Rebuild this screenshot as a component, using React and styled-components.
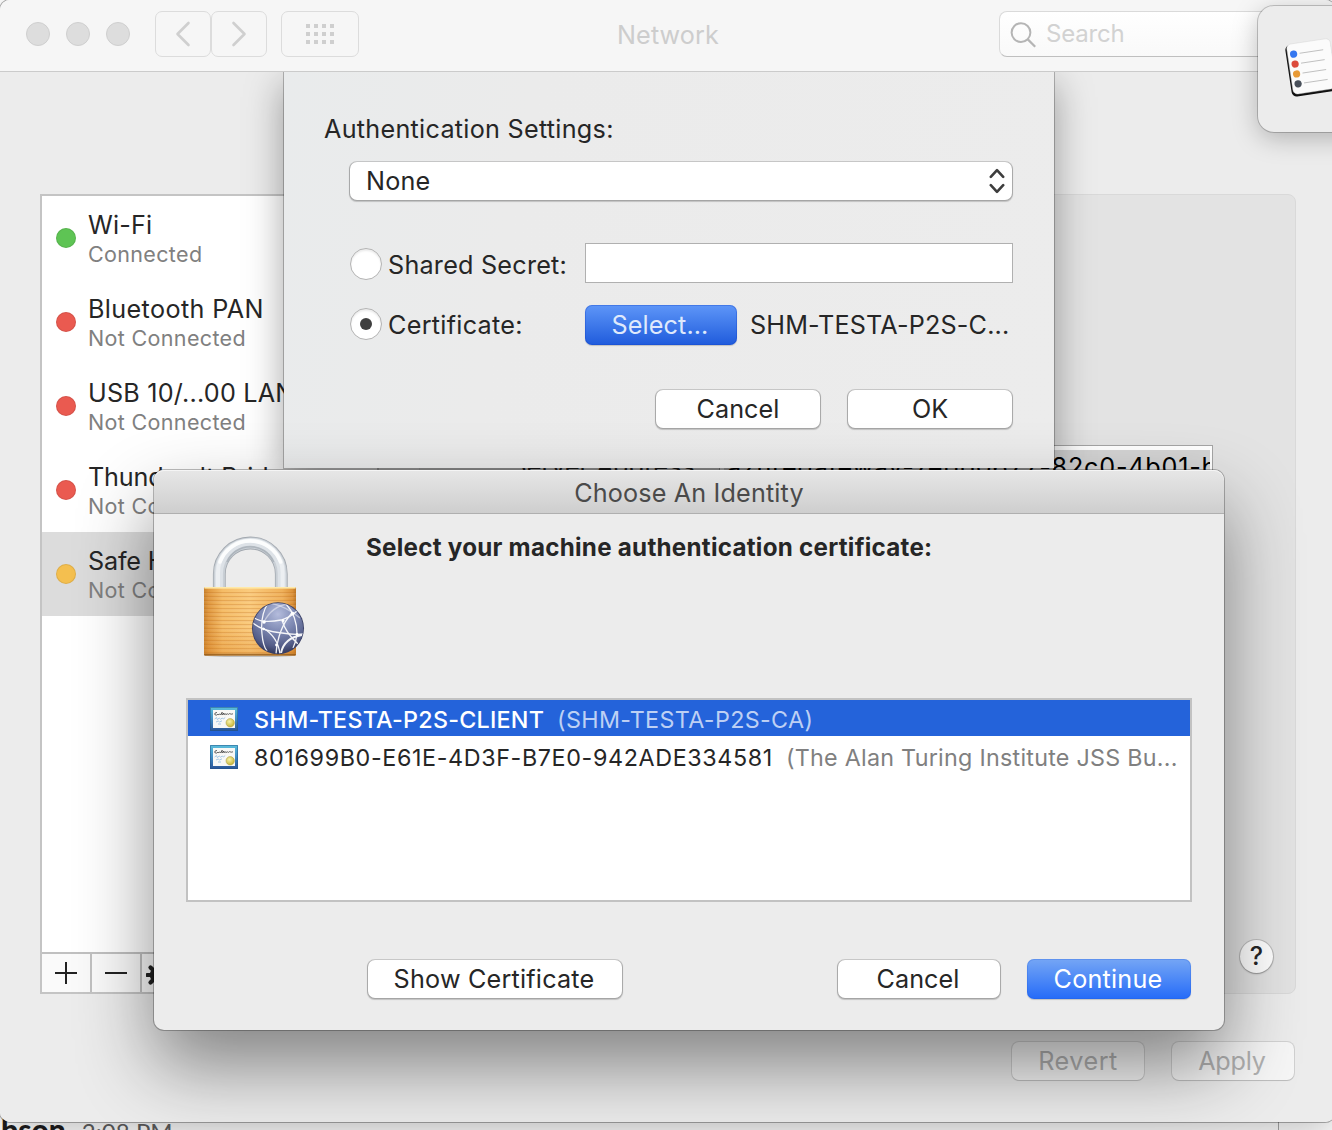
import React from "react";
import styled, { createGlobalStyle } from "styled-components";

const GlobalStyle = createGlobalStyle`
  * { box-sizing: border-box; }
  body {
    margin: 0;
    font-family: Inter, "Liberation Sans", sans-serif;
    color: #262626;
    overflow: hidden;
  }
`;

const Desktop = styled.div`
  position: relative;
  width: 1332px;
  height: 1130px;
  overflow: hidden;
  background: #fff;
`;

const ChatWindow = styled.div`
  position: absolute;
  left: 0;
  top: 1100px;
  width: 1279px;
  height: 80px;
  border-right: 1px solid #a8a8a8;
  display: flex;
  align-items: baseline;
  gap: 16px;
  padding: 11px 0 0 1px;
  font-family: Lato, sans-serif;
  white-space: nowrap;
`;

const ChatAuthor = styled.span`
  font-size: 30px;
  font-weight: 900;
  color: #1d1c1d;
`;

const ChatTime = styled.span`
  font-size: 24px;
  letter-spacing: 0.05px;
  color: #616061;
`;

const Text = styled.span`
  display: block;
  font-size: ${(p) => p.$size || 25.2}px;
  font-weight: ${(p) => p.$weight || 400};
  letter-spacing: ${(p) => p.$ls || 0}px;
  line-height: ${(p) => p.$lh || 30}px;
  color: ${(p) => p.$color || "inherit"};
  white-space: nowrap;
`;

/* ---------- Network preferences window ---------- */

const Window = styled.section`
  position: absolute;
  isolation: isolate;
  left: 0;
  top: 0;
  width: 1335px;
  height: 1122px;
  display: flex;
  flex-direction: column;
  background: #ececec;
  border-radius: 10px;
  overflow: hidden;
`;

const WindowShadow = styled.div`
  position: absolute;
  left: 0;
  top: 0;
  width: 1335px;
  height: 1122px;
  border-radius: 10px;
  box-shadow: 0 0 0 1px rgba(0, 0, 0, 0.3), 0 10px 40px rgba(0, 0, 0, 0.25);
`;

const Toolbar = styled.header`
  position: relative;
  z-index: 2;
  flex: none;
  display: flex;
  align-items: flex-start;
  height: 72px;
  padding: 11px 16px 0 26px;
  background: #f6f6f6;
  border-bottom: 1px solid #cbcbcb;
`;

const Lights = styled.div`
  display: flex;
  align-items: center;
  gap: 16px;
  height: 46px;
  margin-right: 25px;
`;

const Light = styled.i`
  width: 24px;
  height: 24px;
  border-radius: 50%;
  background: #dddddd;
  border: 1px solid #cfcfcf;
`;

const ToolButton = styled.div`
  display: flex;
  align-items: center;
  justify-content: center;
  width: ${(p) => p.$w}px;
  height: 46px;
  margin-right: ${(p) => p.$mr || 0}px;
  border: 1px solid #dcdcdc;
  border-radius: 7px;
`;

const WindowTitle = styled.div`
  flex: 1;
  display: flex;
  align-items: center;
  justify-content: center;
  height: 48px;
  padding-right: 22px;
`;

const SearchField = styled.div`
  display: flex;
  align-items: center;
  width: 320px;
  height: 46px;
  padding-left: 10px;
  gap: 8px;
  background: linear-gradient(#ffffff, #f9f9f9);
  border: 1px solid #dadada;
  border-bottom-color: #bfbfbf;
  border-radius: 8px;
`;

const WindowBody = styled.div`
  position: relative;
  flex: 1;
  padding: 122px 39px 0 40px;
`;

const Panes = styled.div`
  display: flex;
  gap: 40px;
  height: 800px;
`;

const Sidebar = styled.div`
  flex: none;
  display: flex;
  flex-direction: column;
  width: 339px;
  border: 2px solid #c4c4c4;
  background: #fff;
`;

const ServiceList = styled.div`
  flex: 1;
`;

const Service = styled.div`
  display: flex;
  align-items: center;
  gap: 12px;
  height: 84px;
  padding-left: 14px;
  background: ${(p) => (p.$selected ? "#dcdcdc" : "transparent")};
`;

const StatusDot = styled.i`
  flex: none;
  width: 20px;
  height: 20px;
  border-radius: 50%;
  background: ${(p) => p.$color};
  box-shadow: inset 0 0 0 1px rgba(0, 0, 0, 0.09);
`;

const ServiceText = styled.div`
  padding-top: 2px;
  overflow: hidden;
`;

const SidebarActions = styled.div`
  display: flex;
  height: 40px;
  border-top: 2px solid #c0c0c0;
  background: #fafafa;
`;

const SidebarAction = styled.div`
  display: flex;
  align-items: center;
  justify-content: center;
  width: 50px;
  border-right: 2px solid #c0c0c0;
`;

const GearAction = styled.div`
  display: flex;
  align-items: center;
  padding: 3px 0 0 4px;
`;

const DetailPane = styled.div`
  flex: 1;
  display: flex;
  flex-direction: column;
  justify-content: space-between;
  align-items: flex-end;
  padding: 250px 22px 20px 0;
  background: #e3e3e3;
  border: 1px solid #d9d9d9;
  border-radius: 8px;
`;

const AddressRow = styled.div`
  display: flex;
  align-items: center;
  gap: 17px;
  margin-right: 60px;
`;

const AddressField = styled.div`
  width: 494px;
  height: 42px;
  padding: 4px 2px 4px 4px;
  background: #fff;
  border: 1px solid #a5a5a5;
`;

const SelectedAddress = styled.div`
  height: 100%;
  padding-left: 3px;
  overflow: hidden;
  background: #d4d4d4;
  color: #000;
`;

const HelpButton = styled.div`
  display: flex;
  align-items: center;
  justify-content: center;
  width: 33px;
  height: 33px;
  padding-bottom: 1px;
  border-radius: 50%;
  background: #fff;
  box-shadow: 0 0 0 1px rgba(0, 0, 0, 0.15), 0 1px 2px rgba(0, 0, 0, 0.25);
`;

const WindowFooter = styled.div`
  display: flex;
  justify-content: flex-end;
  gap: 26px;
  padding: 47px 1px 0 0;
`;

/* ---------- Shared controls ---------- */

const variants = {
  plain: `
    margin: 1px;
    background: #fff;
    color: #262626;
    box-shadow: 0 0 0 1px rgba(0,0,0,0.14), 0 1px 1px 0.5px rgba(0,0,0,0.18);
  `,
  disabled: `
    margin: 1px;
    background: #f6f6f6;
    color: #b1b1b1;
    box-shadow: 0 0 0 1px rgba(0,0,0,0.11), 0 1px 1px 0 rgba(0,0,0,0.1);
  `,
  pressed: `
    background: linear-gradient(#5e96f8, #1f5bdc);
    color: #dfe9fc;
    box-shadow: inset 0 0 0 1px rgba(20,70,200,0.35), 0 1px 1px rgba(0,0,0,0.18);
  `,
  primary: `
    background: linear-gradient(#75a6f5, #256bf8);
    color: #fff;
    box-shadow: inset 0 0 0 1px rgba(30,90,220,0.25), 0 1px 1px rgba(0,0,0,0.18);
  `,
};

const ButtonBox = styled.div`
  display: flex;
  width: ${(p) => p.$w}px;
  height: 40px;
  margin-right: ${(p) => p.$mr || 0}px;
`;

const Face = styled.button`
  flex: 1;
  display: flex;
  align-items: center;
  justify-content: center;
  padding: 0 ${(p) => p.$pr}px 0 0;
  border: 0;
  border-radius: 7px;
  font-family: inherit;
  ${(p) => variants[p.$variant]}
`;

const Button = ({ w, mr, pr = 2, variant = "plain", ls, children }) => (
  <ButtonBox $w={w} $mr={mr}>
    <Face $variant={variant} $pr={pr}>
      <Text $ls={ls}>{children}</Text>
    </Face>
  </ButtonBox>
);

/* ---------- Authentication sheet ---------- */

const Sheet = styled.section`
  position: absolute;
  z-index: 1;
  left: 284px;
  top: 0;
  width: 770px;
  height: 396px;
  padding: 37px 41px 0 40px;
  background: linear-gradient(100deg, #e9ebec 0%, #ebebeb 30%, #ececec 100%);
  box-shadow: 0 0 0 1px rgba(0, 0, 0, 0.24), 0 12px 36px rgba(0, 0, 0, 0.36);
`;

const SheetForm = styled.div`
  padding: 12px 0 0 25px;
`;

const PopUp = styled.div`
  display: flex;
  align-items: center;
  justify-content: space-between;
  height: 38px;
  margin: 1px 1px 43px;
  padding: 0 7.5px 0 16px;
  border-radius: 7px;
  background: #fff;
  box-shadow: 0 0 0 1px rgba(0, 0, 0, 0.14), 0 1px 1px 0.5px rgba(0, 0, 0, 0.18);
`;

const FormRow = styled.div`
  display: grid;
  grid-template-columns: 236px 1fr;
  align-items: center;
  height: 40px;
  margin-bottom: ${(p) => p.$mb}px;
`;

const RadioLabel = styled.div`
  display: flex;
  align-items: center;
  gap: 6px;
  padding: ${(p) => p.$pt || 0}px 0 0 1px;
`;

const Radio = styled.i`
  display: flex;
  align-items: center;
  justify-content: center;
  width: 32px;
  height: 32px;
  margin-bottom: 2px;
  border-radius: 50%;
  border: 1px solid #b3b3b3;
  background: #fff;
  box-shadow: inset 0 2px 2px rgba(0, 0, 0, 0.08);
  &::after {
    content: "";
    width: 12px;
    height: 12px;
    border-radius: 50%;
    background: ${(p) => (p.$on ? "#3f3f3f" : "transparent")};
  }
`;

const SecretInput = styled.div`
  height: 40px;
  border: 1px solid #b0b0b0;
  background: #fff;
`;

const CertChoice = styled.div`
  display: flex;
  align-items: center;
`;

const ButtonRow = styled.div`
  display: flex;
  justify-content: flex-end;
`;

/* ---------- Identity dialog ---------- */

const Dialog = styled.section`
  position: absolute;
  left: 154px;
  top: 470px;
  width: 1070px;
  height: 560px;
  display: flex;
  flex-direction: column;
  background: #ececec;
  border-radius: 10px;
  box-shadow: 0 0 0 1px rgba(0, 0, 0, 0.26), 0 36px 76px rgba(0, 0, 0, 0.45);
`;

const DialogTitle = styled.header`
  display: flex;
  align-items: center;
  justify-content: center;
  height: 44px;
  padding-top: 3px;
  border-radius: 10px 10px 0 0;
  border-bottom: 1px solid #afafaf;
  background: linear-gradient(#e7e7e7, #cecece);
  box-shadow: inset 0 1px 0 #f5f5f5;
`;

const DialogBody = styled.div`
  display: flex;
  flex-direction: column;
  padding: 19px 32px 0;
`;

const DialogIntro = styled.div`
  display: flex;
  align-items: flex-start;
  height: 165px;
  padding-left: 12px;
  gap: 56px;
`;

const IdentityList = styled.div`
  display: flex;
  flex-direction: column;
  gap: 2px;
  height: 204px;
  border: 2px solid #c2c2c2;
  background: #fff;
`;

const Identity = styled.div`
  display: flex;
  align-items: center;
  height: 36px;
  padding: 3px 0 0 22px;
  background: ${(p) => (p.$selected ? "#2463da" : "transparent")};
  color: ${(p) => (p.$selected ? "#fff" : "#262626")};
`;

const IdentityName = styled(Text)`
  margin: 0 13px 0 16px;
`;

const DialogFooter = styled.div`
  display: flex;
  padding: 57px 0 0 181px;
`;

/* ---------- Notification banner ---------- */

const Banner = styled.aside`
  position: absolute;
  left: 1258px;
  top: 6px;
  width: 400px;
  height: 126px;
  display: flex;
  align-items: center;
  padding-left: 21px;
  background: #ececec;
  border-radius: 16px;
  box-shadow: 0 0 0 1px rgba(0, 0, 0, 0.2), 0 6px 26px rgba(0, 0, 0, 0.25);
`;

/* ---------- Drawings ---------- */

const Chevron = ({ flip }) => (
  <svg width="16" height="26" viewBox="0 0 16 26" fill="none" stroke="#cfcfcf" strokeWidth="2.6" strokeLinecap="round" strokeLinejoin="round">
    <path d={flip ? "M2.5 2 L13.5 13 L2.5 24" : "M13.5 2 L2.5 13 L13.5 24"} />
  </svg>
);

const GridIcon = () => (
  <svg width="28" height="20" viewBox="0 0 28 20" fill="#cfcfcf">
    {[0, 8, 16].map((y) => [0, 8, 16, 24].map((x) => <rect key={`${x}-${y}`} x={x} y={y} width="4" height="4" />))}
  </svg>
);

const SearchIcon = () => (
  <svg width="28" height="28" viewBox="0 0 28 28" fill="none" stroke="#b5b5b5" strokeWidth="2">
    <circle cx="11" cy="12.6" r="9.4" />
    <path d="M17.8 19.4 L25.2 26.8" strokeWidth="2.2" />
  </svg>
);

const UpDown = () => (
  <svg width="16" height="26" viewBox="0 0 16 26" fill="none" stroke="#3d3d3d" strokeWidth="2.6" strokeLinecap="round" strokeLinejoin="round">
    <path d="M1.8 8.8 L8 2.2 L14.2 8.8 M1.8 17.2 L8 23.8 L14.2 17.2" />
  </svg>
);

const Plus = () => (
  <svg width="22" height="22" viewBox="0 0 22 22" stroke="#222" strokeWidth="2">
    <path d="M0 11 H22 M11 0 V22" />
  </svg>
);

const Minus = () => (
  <svg width="22" height="22" viewBox="0 0 22 22" stroke="#222" strokeWidth="2">
    <path d="M0 11 H22" />
  </svg>
);

const Gear = () => (
  <svg width="24" height="24" viewBox="-12 -12 24 24" stroke="#222" fill="none">
    <circle r="6" strokeWidth="4.5" />
    {[0, 45, 90, 135, 180, 225, 270, 315].map((a) => (
      <path key={a} d="M8 0 H10.6" strokeWidth="4.2" strokeLinecap="round" transform={`rotate(${a})`} />
    ))}
  </svg>
);

const Padlock = () => (
  <svg width="112" height="128" viewBox="198 533 112 128">
    <defs>
      <linearGradient id="brass" x1="0" x2="1" y1="0" y2="0">
        <stop offset="0" stopColor="#c9832f" />
        <stop offset="0.05" stopColor="#e0983f" />
        <stop offset="0.2" stopColor="#f5bc66" />
        <stop offset="0.5" stopColor="#fbcb7d" />
        <stop offset="0.85" stopColor="#f0b15a" />
        <stop offset="0.96" stopColor="#dd933a" />
        <stop offset="1" stopColor="#bd7727" />
      </linearGradient>
      <pattern id="ridges" width="10" height="4" patternUnits="userSpaceOnUse">
        <rect width="10" height="1.3" fill="#b8691a" opacity="0.28" />
        <rect y="1.3" width="10" height="1" fill="#fff" opacity="0.1" />
      </pattern>
      <linearGradient id="lockShade" x1="0" x2="0" y1="0" y2="1">
        <stop offset="0.6" stopColor="#d97f1e" stopOpacity="0" />
        <stop offset="1" stopColor="#d97f1e" stopOpacity="0.3" />
      </linearGradient>
      <radialGradient id="globe" cx="0.5" cy="0.22" r="0.8">
        <stop offset="0" stopColor="#b4bcdc" />
        <stop offset="0.45" stopColor="#7d88b2" />
        <stop offset="0.8" stopColor="#545d88" />
        <stop offset="1" stopColor="#30365a" />
      </radialGradient>
      <clipPath id="globeClip">
        <circle cx="278" cy="628.3" r="25.2" />
      </clipPath>
    </defs>
    <ellipse cx="250" cy="655.4" rx="46" ry="1.4" fill="#000" opacity="0.25" />
    <g fill="none">
      <path d="M219.3 588 V574 a31 31 0 0 1 62 0 V588" stroke="#a3a9b0" strokeWidth="12.8" />
      <path d="M219.3 588 V574 a31 31 0 0 1 62 0 V588" stroke="#c9cfd5" strokeWidth="11.2" />
      <path d="M218.9 588 V573.6 a31.4 31.4 0 0 1 62.8 0 V588" stroke="#dde2e7" strokeWidth="8" />
      <path d="M218 588 V572.8 a32.3 32.3 0 0 1 64.6 0 V588" stroke="#eceff2" strokeWidth="4" />
      <path d="M220 562 a32.3 32.3 0 0 1 60.6 0" stroke="#fcfdfd" strokeWidth="3.6" strokeLinecap="round" />
      <path d="M227 562 a25.3 25.3 0 0 1 46.6 0" stroke="#9ba3ac" strokeWidth="1.8" opacity="0.6" />
    </g>
    <rect x="204" y="587" width="92" height="68.4" rx="1.5" fill="url(#brass)" />
    <rect x="204" y="591" width="92" height="63" fill="url(#ridges)" />
    <rect x="204" y="587" width="92" height="68.4" rx="1.5" fill="url(#lockShade)" />
    <rect x="204.5" y="587" width="91" height="1.6" fill="#ffe9a8" />
    <rect x="204" y="653.8" width="92" height="1.6" rx="0.8" fill="#8e5718" opacity="0.75" />
    <circle cx="278" cy="628.3" r="26" fill="#3a4066" />
    <circle cx="278" cy="628.3" r="25.2" fill="url(#globe)" />
    <g clipPath="url(#globeClip)" fill="none" stroke="#fff" strokeWidth="1.3" opacity="0.92">
      <path d="M253 617 Q262 624 281 620 Q291 617 297 611" />
      <path d="M253 623 Q262 631 282 633 Q294 635 304 634" />
      <path d="M268 603 Q260 616 262 634 Q263 646 267 651" />
      <path d="M286 604 Q297 616 297 634 Q296 642 293 648" />
      <path d="M292 613 Q278 628 276 654" />
      <path d="M282 620 Q285 632 298 644" />
      <path d="M263 628 Q278 637 280 654" />
      <path d="M270 603 Q286 606 300 618" opacity="0.5" />
      <path d="M281 653 Q284 638 302 635" strokeWidth="2" />
      <path d="M264 622 Q272 606 288 604" opacity="0.5" />
    </g>
    <g fill="#fff">
      <circle cx="264" cy="622" r="1.8" />
      <circle cx="292.5" cy="613.5" r="1.8" />
      <circle cx="263.5" cy="629" r="1.3" />
      <circle cx="283" cy="620.5" r="1.5" />
      <circle cx="276.5" cy="645" r="1.4" />
      <circle cx="297" cy="634.5" r="1.4" />
    </g>
  </svg>
);

const CertificateFrame = styled.svg`
  flex: none;
  width: 30px;
  height: 26px;
  margin: 0 -2px 1px 0;
`;

const CertificateIcon = () => (
  <CertificateFrame viewBox="0 0 30 26">
    <defs>
      <linearGradient id="frame" x1="0" x2="0" y1="0" y2="1">
        <stop offset="0" stopColor="#5cc0dc" />
        <stop offset="0.5" stopColor="#3f8cc4" />
        <stop offset="1" stopColor="#2a5496" />
      </linearGradient>
      <radialGradient id="seal" cx="0.4" cy="0.35" r="0.7">
        <stop offset="0" stopColor="#f8f3a8" />
        <stop offset="1" stopColor="#c3b02f" />
      </radialGradient>
    </defs>
    <rect x="0" y="1" width="28" height="24" rx="0.6" fill="url(#frame)" />
    <rect x="0.5" y="1.5" width="27" height="23" fill="none" stroke="#1f4f86" strokeOpacity="0.5" />
    <rect x="3" y="4" width="22" height="18" fill="#f8f8f6" />
    <path d="M7 6.4 q-3 0.4 -2.2 2.2 q1.4 1.4 3.2 -0.4 q1 1.2 1.8 -0.2 l1 0.6 l1.4 -2.4 l-0.4 2.4 q1.2 0.4 2 -1.6 l0.2 1.8 l1.2 -1.2 l0.6 1 l1.6 -0.8 l1 0.6 l1.2 -0.8 l1.6 0.6 l1.8 -0.4" fill="none" stroke="#333" strokeWidth="0.75" />
    <path d="M4.6 13 l2 -1.4 l0.8 2 l1.8 -1.6 l1.2 1.2 l2 -1.2 l1 1 l1.8 -1.4 M6 16 l2.2 -1 l1.4 1 l2.4 -1.2 M8 18 l3 0" fill="none" stroke="#8fbbe0" strokeWidth="0.8" />
    <circle cx="20.2" cy="16.8" r="4.2" fill="url(#seal)" stroke="#a89a3c" strokeWidth="0.5" />
  </CertificateFrame>
);

const RemindersIcon = () => (
  <svg width="72" height="72" viewBox="1280 33 72 72">
    <g transform="translate(1285.5 44.5) rotate(-8.5)">
      <rect x="0" y="1.2" width="45" height="52" rx="5" fill="#111" />
      <rect x="1.6" y="0.4" width="44" height="50.5" rx="4.5" fill="#fbfbfb" stroke="#cfcfcf" strokeWidth="0.4" />
      {["#3577f0", "#dc4a3c", "#e89a36", "#49505a"].map((c, i) => (
        <g key={c}>
          <circle cx="7.6" cy={10.9 + i * 10} r="3.6" fill={c} />
          <path d={`M13.6 ${10.9 + i * 10} H37.5`} stroke="#bdbdbd" strokeWidth="0.9" />
        </g>
      ))}
    </g>
  </svg>
);

/* ---------- Data ---------- */

const RED = "#ea5a50";
const services = [
  { name: "Wi-Fi", status: "Connected", color: "#5ec454", ls: 0.16 },
  { name: "Bluetooth PAN", status: "Not Connected", color: RED, ls: 0.36 },
  { name: "USB 10/...00 LAN", status: "Not Connected", color: RED, ls: 0.2 },
  { name: "Thund...olt Bridge", status: "Not Connected", color: RED, ls: -0.15 },
  { name: "Safe Haven", status: "Not Connected", color: "#f4bf4f", ls: -0.2, selected: true },
];

const identities = [
  { name: "SHM-TESTA-P2S-CLIENT", issuer: "(SHM-TESTA-P2S-CA)", weight: 450, ls: 0.24, ils: 0.36, selected: true },
  { name: "801699B0-E61E-4D3F-B7E0-942ADE334581", issuer: "(The Alan Turing Institute JSS Bu...", ls: 0.63, ils: 0.26 },
];

export default function App() {
  return (
    <Desktop>
      <GlobalStyle />
      <ChatWindow>
        <ChatAuthor>bson</ChatAuthor>
        <ChatTime>2:08 PM</ChatTime>
      </ChatWindow>
      <WindowShadow />
      <Window>
        <Toolbar>
          <Lights>
            <Light />
            <Light />
            <Light />
          </Lights>
          <ToolButton $w={56}><Chevron /></ToolButton>
          <ToolButton $w={56} $mr={14}><Chevron flip /></ToolButton>
          <ToolButton $w={78}><GridIcon /></ToolButton>
          <WindowTitle>
            <Text $ls={0.1} $color="#cdcdcd">Network</Text>
          </WindowTitle>
          <SearchField>
            <SearchIcon />
            <Text $size={24} $ls={-0.2} $color="#d2d2d2">Search</Text>
          </SearchField>
        </Toolbar>

        <WindowBody>
          <Panes>
            <Sidebar>
              <ServiceList>
                {services.map((s) => (
                  <Service key={s.name} $selected={s.selected}>
                    <StatusDot $color={s.color} />
                    <ServiceText>
                      <Text $ls={s.ls}>{s.name}</Text>
                      <Text $size={21.5} $ls={0.34} $lh={28} $color="#808080">{s.status}</Text>
                    </ServiceText>
                  </Service>
                ))}
              </ServiceList>
              <SidebarActions>
                <SidebarAction><Plus /></SidebarAction>
                <SidebarAction><Minus /></SidebarAction>
                <GearAction><Gear /></GearAction>
              </SidebarActions>
            </Sidebar>
            <DetailPane>
              <AddressRow>
                <Text>Server Address:</Text>
                <AddressField>
                  <SelectedAddress>
                    <Text $ls={0.77} $lh={34}>azuregateway-7ebb0677-82c0-4b01-b</Text>
                  </SelectedAddress>
                </AddressField>
              </AddressRow>
              <HelpButton>
                <Text $weight={450}>?</Text>
              </HelpButton>
            </DetailPane>
          </Panes>
          <WindowFooter>
            <Button w={134} pr={0} variant="disabled" ls={0.5}>Revert</Button>
            <Button w={124} variant="disabled" ls={-0.2}>Apply</Button>
          </WindowFooter>

          <Sheet>
            <Text $lh={40} $ls={0.27}>Authentication Settings:</Text>
            <SheetForm>
              <PopUp>
                <Text $ls={0.2}>None</Text>
                <UpDown />
              </PopUp>
              <FormRow $mb={22}>
                <RadioLabel $pt={4}>
                  <Radio />
                  <Text $ls={0.22}>Shared Secret:</Text>
                </RadioLabel>
                <SecretInput />
              </FormRow>
              <FormRow $mb={44}>
                <RadioLabel>
                  <Radio $on />
                  <Text $ls={0.28}>Certificate:</Text>
                </RadioLabel>
                <CertChoice>
                  <Button w={152} mr={13} variant="pressed" ls={0.1}>Select...</Button>
                  <Text $ls={0.16}>SHM-TESTA-P2S-C...</Text>
                </CertChoice>
              </FormRow>
              <ButtonRow>
                <Button w={166} mr={26} pr={0} ls={0.05}>Cancel</Button>
                <Button w={166} pr={0}>OK</Button>
              </ButtonRow>
            </SheetForm>
          </Sheet>
        </WindowBody>
      </Window>

      <Dialog>
        <DialogTitle>
          <Text $ls={0.14} $color="#4a4a4a">Choose An Identity</Text>
        </DialogTitle>
        <DialogBody>
          <DialogIntro>
            <Padlock />
            <Text $size={24.2} $weight={700} $ls={0.25}>Select your machine authentication certificate:</Text>
          </DialogIntro>
          <IdentityList>
            {identities.map((id) => (
              <Identity key={id.name} $selected={id.selected}>
                <CertificateIcon />
                <IdentityName $size={23.3} $weight={id.weight} $ls={id.ls}>{id.name}</IdentityName>
                <Text $size={23.3} $ls={id.ils} $color={id.selected ? "#bdd0f4" : "#808080"}>{id.issuer}</Text>
              </Identity>
            ))}
          </IdentityList>
          <DialogFooter>
            <Button w={256} mr={214} ls={0.2}>Show Certificate</Button>
            <Button w={164} mr={26} ls={0.05}>Cancel</Button>
            <Button w={164} variant="primary" ls={0.2}>Continue</Button>
          </DialogFooter>
        </DialogBody>
      </Dialog>

      <Banner>
        <RemindersIcon />
      </Banner>
    </Desktop>
  );
}
